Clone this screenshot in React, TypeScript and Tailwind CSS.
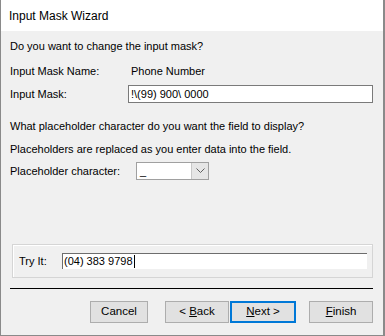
import React from 'react';

const font = { fontFamily: '"Liberation Sans", Arial, sans-serif' };

function Button({ children, primary = false, width }: { children: React.ReactNode; primary?: boolean; width: string }) {
  return (
    <div
      className={`flex h-[22px] items-center justify-center bg-[#e1e1e1] text-[11.5px] text-black ${width} ${
        primary ? 'border-2 border-[#0078d7]' : 'border border-[#adadad]'
      }`}
    >
      {children}
    </div>
  );
}

export default function App() {
  return (
    <div className="h-[336px] w-[385px] bg-[#8a8a8a] pl-px pr-[2px] pb-[1px]" style={font}>
      <div className="flex h-full w-full flex-col bg-[#f0f0f0]">
        <div className="flex h-[31px] items-center bg-white pl-[8px] text-[12px] text-black">Input Mask Wizard</div>

        <div className="flex flex-col pl-[9px] pr-[10px] text-[11px] text-black">
          <div className="mt-[7px] flex h-[16px] items-center">Do you want to change the input mask?</div>

          <div className="mt-[9px] flex h-[16px] items-center">
            <span className="w-[121px]">Input Mask Name:</span>
            <span>Phone Number</span>
          </div>

          <div className="mt-[6px] flex h-[18px] items-center">
            <span className="w-[118px]">Input Mask:</span>
            <div className="flex h-[18px] flex-1 items-center border border-[#7a7a7a] bg-white pl-[2px]">
              !\(99) 900\ 0000
            </div>
          </div>

          <div className="mt-[15px] flex h-[16px] items-center">What placeholder character do you want the field to display?</div>
          <div className="mt-[7px] flex h-[16px] items-center">Placeholders are replaced as you enter data into the field.</div>

          <div className="mt-[5px] flex h-[18px] items-center">
            <span className="w-[126px]">Placeholder character:</span>
            <div className="flex h-[18px] w-[73px] border border-[#a0a0a0] bg-white">
              <span className="flex-1 pl-[3px] leading-[16px]">_</span>
              <div className="flex w-[17px] items-center justify-center border-l border-[#c8c8c8] bg-[#e6e6e6]">
                <svg width="9" height="6" viewBox="0 0 9 6" fill="none">
                  <path d="M0.5 0.5 L4.5 4.5 L8.5 0.5" stroke="#606060" strokeWidth="1" />
                </svg>
              </div>
            </div>
          </div>

          <div className="ml-[2px] mt-[64px] flex h-[34px] items-center border border-[#d5d5d5] pl-[6px] pr-[5px] shadow-[inset_1px_1px_0_#ffffff]">
            <span className="w-[43px]">Try It:</span>
            <div className="flex h-[16px] flex-1 items-center border-l border-t border-[#6d6d6d] bg-white pl-[1px] leading-none">
              (04) 383 9798
              <span className="ml-[1px] inline-block h-[13px] w-px bg-black" />
            </div>
          </div>

          <div className="mt-[10px] h-px bg-black" />

          <div className="mt-[12px] flex items-center pl-[80px]">
            <Button width="w-[58px]">Cancel</Button>
            <div className="w-[17px]" />
            <Button width="w-[64px]">
              &lt;&nbsp;<span className="underline">B</span>ack
            </Button>
            <div className="w-px" />
            <Button primary width="w-[66px]">
              <span className="underline">N</span>ext &gt;
            </Button>
            <div className="w-[13px]" />
            <Button width="w-[64px]">
              <span className="underline">F</span>inish
            </Button>
          </div>
        </div>
      </div>
    </div>
  );
}
